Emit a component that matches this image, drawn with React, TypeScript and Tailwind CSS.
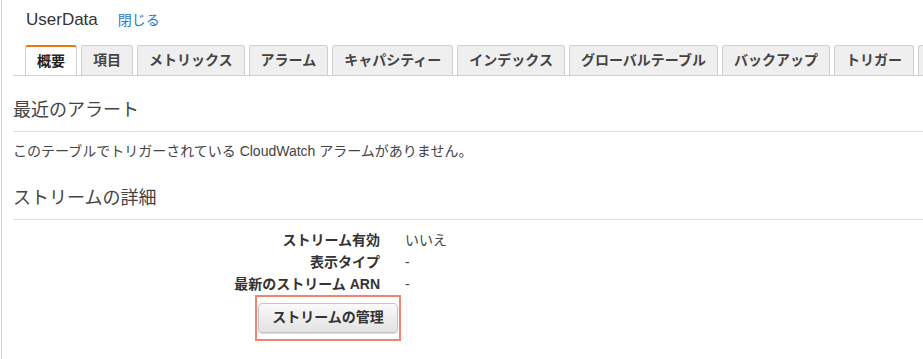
import React from 'react';

const tabs = ['概要', '項目', 'メトリックス', 'アラーム', 'キャパシティー', 'インデックス', 'グローバルテーブル', 'バックアップ', 'トリガー'];

const details = [
  { label: 'ストリーム有効', value: 'いいえ' },
  { label: '表示タイプ', value: '-' },
  { label: '最新のストリーム ARN', value: '-' },
];

export default function App() {
  return (
    <div
      className="h-[359px] w-[923px] overflow-hidden bg-white text-[#444]"
      style={{ fontFamily: '"Liberation Sans", "Noto Sans CJK JP", sans-serif' }}
    >
      <div className="ml-[1px] h-full border-l border-[#d4d4d4] pl-[11px]">
        {/* タイトル */}
        <div className="flex items-baseline gap-[20px] pl-[13px] pt-[7px]">
          <span className="text-[17px] text-[#333]">UserData</span>
          <a className="text-[14px] text-[#2a7bc7]">閉じる</a>
        </div>

        {/* タブ */}
        <div className="mt-[12px] flex h-[31px] items-end gap-[4px] overflow-hidden whitespace-nowrap border-b border-[#cfcfcf] pl-[12px]">
          {tabs.map((t, i) =>
            i === 0 ? (
              <div
                key={t}
                className="relative -mb-px flex h-[31px] shrink-0 items-center rounded-t-[3px] border-x border-t-2 border-x-[#d0d0d0] border-t-[#e47911] bg-white px-[11px] text-[14px] font-bold text-[#222]"
              >
                {t}
              </div>
            ) : (
              <div
                key={t}
                className="flex h-[30px] shrink-0 items-center rounded-t-[3px] border-x border-t border-[#d0d0d0] bg-[#efefef] px-[11px] text-[14px] font-bold text-[#444]"
              >
                {t}
              </div>
            )
          )}
          <div className="h-[30px] w-[40px] shrink-0 rounded-t-[3px] border-x border-t border-[#d0d0d0] bg-[#efefef]" />
        </div>

        {/* 最近のアラート */}
        <div className="mt-[22px] border-b border-[#dedede] pb-[9px]">
          <h2 className="text-[18px] leading-[24px] text-[#444]">最近のアラート</h2>
        </div>
        <p className="mt-[10px] text-[14px] leading-[18px] text-[#444]">
          このテーブルでトリガーされている CloudWatch アラームがありません。
        </p>

        {/* ストリームの詳細 */}
        <div className="mt-[26px] border-b border-[#dedede] pb-[9px]">
          <h2 className="text-[18px] leading-[24px] text-[#444]">ストリームの詳細</h2>
        </div>

        <div className="mt-[11px] flex flex-col gap-[4px]">
          {details.map((d) => (
            <div key={d.label} className="flex text-[14px] leading-[18px]">
              <div className="w-[367px] text-right font-bold text-[#333]">{d.label}</div>
              <div className="pl-[25px] text-[#444]">{d.value}</div>
            </div>
          ))}
        </div>

        <div className="ml-[242px] mt-[2px] w-[146px] border-2 border-[#f2846f] px-[1px] py-[6px]">
          <button className="h-[30px] w-full rounded-[4px] border border-[#c4c4c4] bg-gradient-to-b from-[#fafafa] to-[#e2e2e2] text-[14px] font-bold text-[#333] shadow-[0_1px_1px_rgba(0,0,0,0.15)]">
            ストリームの管理
          </button>
        </div>
      </div>
    </div>
  );
}
